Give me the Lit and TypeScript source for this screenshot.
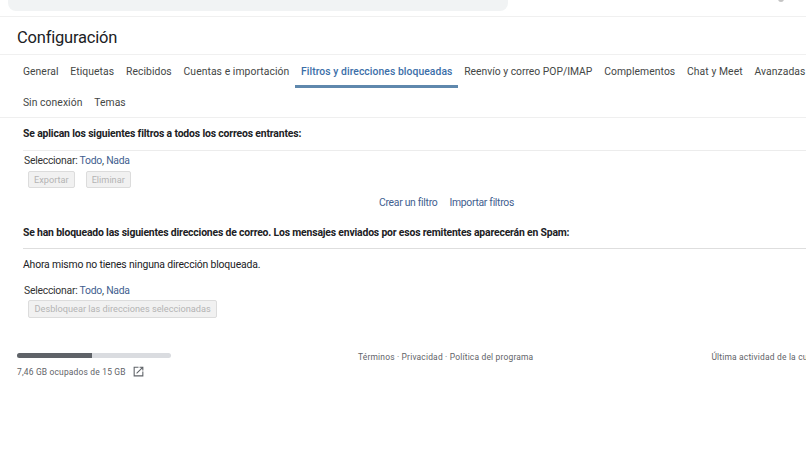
import { LitElement, html, css } from "lit";
import { customElement } from "lit/decorators.js";

@customElement("app-root")
export class AppRoot extends LitElement {
  static styles = css`
    :host { display: block; position: relative; width: 806px; height: 450px; overflow: hidden; background: #fff; font-family: Roboto, "Liberation Sans", sans-serif; color: #202124; }
    * { box-sizing: border-box; }
    .top { height: 17px; border-bottom: 1px solid #f0f0f0; padding-left: 8px; }
    .search { width: 500px; height: 11px; background: #f1f3f4; border-radius: 0 0 8px 8px; }
    .avatar { position: absolute; left: 778px; top: -4px; width: 6px; height: 6px; border-radius: 50%; background: #c4c4c4; }
    .title { height: 38px; padding: 9px 0 0 17px; font-size: 16.5px; letter-spacing: -0.2px; line-height: 24px; color: #202124; border-bottom: 1px solid #f0f0f0; white-space: nowrap; }
    .tabs { padding-left: 17px; border-bottom: 1px solid #efefef; width: 806px; }
    .tabrow { display: flex; height: 33px; white-space: nowrap; width: 900px; }
    .tab { padding: 0 5.9px; height: 33px; line-height: 33px; font-size: 10.35px; color: #444746; letter-spacing: 0.07px; }
    .tab.narrow { letter-spacing: -0.01px; }
    .tab.on { color: #3b6ea8; border-bottom: 3px solid #5f88ad; font-weight: 500; }
    .tabrow.two { height: 29px; }
    .tabrow.two .tab { height: 29px; line-height: 30px; }
    .h { font-size: 10.4px; letter-spacing: -0.15px; font-weight: 700; line-height: 14px; color: #202124; padding-left: 23px; white-space: nowrap; }
    .h.long { letter-spacing: -0.17px; margin-top: 16px; }
    .sec1 { padding-top: 9px; }
    .rule { height: 1px; background: #ececec; margin: 9px 0 0 23px; }
    .rule.dark { background: #dedede; margin-top: 8px; }
    .sel { font-size: 10.4px; letter-spacing: -0.25px; line-height: 14px; padding-left: 24px; color: #333; margin-top: 3px; }
    .sel.second { margin-top: 12px; }
    .sel a, .links a { color: #3f5e8f; text-decoration: none; }
    .btns { display: flex; gap: 11px; padding-left: 28px; margin-top: 3px; }
    .btns.tight { margin-top: 2px; }
    .btn { height: 17px; border: 1px solid #dcdcdc; background: #f1f1f1; border-radius: 2px; font-size: 9.2px; line-height: 15px; color: #b4b4b4; padding: 0 5px; white-space: nowrap; }
    .btn.wide { height: 18px; line-height: 16px; padding: 0 5.5px; }
    .links { display: flex; gap: 12px; padding-left: 379px; margin-top: 8px; font-size: 10.4px; letter-spacing: -0.3px; line-height: 14px; }
    .plain { font-size: 10.4px; letter-spacing: -0.16px; line-height: 14px; padding-left: 23px; margin-top: 9px; color: #202124; white-space: nowrap; }
    .foot { display: flex; padding-left: 17px; margin-top: 35px; white-space: nowrap; font-size: 8.45px; color: #5f6368; letter-spacing: 0.18px; }
    .store { width: 154px; flex: none; }
    .bar { height: 5px; background: #dadce0; border-radius: 3px; overflow: hidden; }
    .fill { height: 5px; background: #5f6368; }
    .used { display: flex; align-items: center; gap: 7px; margin-top: 7px; line-height: 12px; }
    .used svg { width: 13px; height: 13px; display: block; margin-left: -1px; }
    .terms { margin-left: 187px; line-height: 12px; margin-top: -2px; }
    .last { margin-left: 178px; line-height: 12px; margin-top: -2px; }
  `;

  render() {
    const row1 = ["General", "Etiquetas", "Recibidos", "Cuentas e importación"];
    const row1b = ["Complementos", "Chat y Meet", "Avanzadas"];
    return html`
      <div class="avatar"></div>
      <div class="top"><div class="search"></div></div>
      <div class="title">Configuración</div>
      <div class="tabs">
        <div class="tabrow">
          ${row1.map((t) => html`<div class="tab">${t}</div>`)}
          <div class="tab on">Filtros y direcciones bloqueadas</div>
          <div class="tab narrow">Reenvío y correo POP/IMAP</div>
          ${row1b.map((t) => html`<div class="tab">${t}</div>`)}
        </div>
        <div class="tabrow two">
          <div class="tab">Sin conexión</div>
          <div class="tab">Temas</div>
        </div>
      </div>
      <div class="sec1">
        <div class="h">Se aplican los siguientes filtros a todos los correos entrantes:</div>
        <div class="rule"></div>
      </div>
      <div class="sel">Seleccionar: <a>Todo</a>, <a>Nada</a></div>
      <div class="btns"><div class="btn">Exportar</div><div class="btn">Eliminar</div></div>
      <div class="links"><a>Crear un filtro</a><a>Importar filtros</a></div>
      <div class="h long">Se han bloqueado las siguientes direcciones de correo. Los mensajes enviados por esos remitentes aparecerán en Spam:</div>
      <div class="rule dark"></div>
      <div class="plain">Ahora mismo no tienes ninguna dirección bloqueada.</div>
      <div class="sel second">Seleccionar: <a>Todo</a>, <a>Nada</a></div>
      <div class="btns tight"><div class="btn wide">Desbloquear las direcciones seleccionadas</div></div>
      <div class="foot">
        <div class="store">
          <div class="bar"><div class="fill" style="width:49%"></div></div>
          <div class="used">
            <span>7,46 GB ocupados de 15 GB</span>
            <svg viewBox="0 0 24 24" fill="#5f6368"><path d="M19 19H5V5h7V3H3v18h18v-9h-2v7zM14 3v2h3.6l-9.8 9.8 1.4 1.4L19 6.4V10h2V3h-7z"/></svg>
          </div>
        </div>
        <div class="terms">Términos · Privacidad · Política del programa</div>
        <div class="last">Última actividad de la cuenta: hace 0 minutos</div>
      </div>
    `;
  }
}
